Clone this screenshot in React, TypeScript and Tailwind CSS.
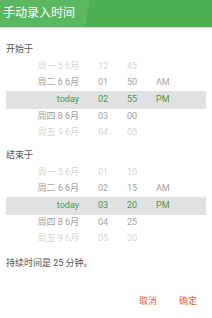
const font = { fontFamily: 'Roboto, "Noto Sans CJK SC", sans-serif' };

type Row = { date: string; hour: string; min: string; ampm: string };

function Picker({ rows }: { rows: Row[] }) {
  return (
    <div className="mx-[6px] flex flex-col text-[9px]">
      {rows.map((r, i) => {
        const sel = i === 2;
        const color = sel
          ? "text-[#4b9a4e]"
          : i === 1 || i === 3
          ? "text-[#a3a3a3]"
          : "text-[#d6d6d6]";
        return (
          <div
            key={i}
            className={`flex items-center ${color} ${sel ? "h-[18px] bg-[#e1e1e1]" : "h-[16px]"}`}
          >
            <span className="w-[73px] text-right">{r.date}</span>
            <span className="ml-[12px] w-[24px] text-center">{r.hour}</span>
            <span className="ml-[5px] w-[24px] text-center">{r.min}</span>
            <span className="ml-[12px]">{r.ampm}</span>
          </div>
        );
      })}
    </div>
  );
}

export default function App() {
  const start: Row[] = [
    { date: "周一 5 6月", hour: "12", min: "45", ampm: "" },
    { date: "周二 6 6月", hour: "01", min: "50", ampm: "AM" },
    { date: "today", hour: "02", min: "55", ampm: "PM" },
    { date: "周四 8 6月", hour: "03", min: "00", ampm: "" },
    { date: "周五 9 6月", hour: "04", min: "05", ampm: "" },
  ];
  const end: Row[] = [
    { date: "周一 5 6月", hour: "01", min: "10", ampm: "" },
    { date: "周二 6 6月", hour: "02", min: "15", ampm: "AM" },
    { date: "today", hour: "03", min: "20", ampm: "PM" },
    { date: "周四 8 6月", hour: "04", min: "25", ampm: "" },
    { date: "周五 9 6月", hour: "05", min: "30", ampm: "" },
  ];

  return (
    <div className="w-[212px] h-[318px] bg-white overflow-hidden" style={font}>
      <div className="relative h-[27px] bg-[#4caf50] shadow-[0_1px_1px_rgba(0,0,0,0.15)] overflow-hidden">
        <div className="absolute left-[-10px] top-0 h-[27px] w-[95px] bg-[#5cb860] -skew-x-[10deg] origin-bottom-left" />
        <div className="relative pl-[3px] leading-[27px] text-[12px] text-white">手动录入时间</div>
      </div>

      <div className="mt-[16px] ml-[6px] h-[12px] leading-[12px] text-[9px] text-[#555]">开始于</div>
      <div className="mt-[4px]">
        <Picker rows={start} />
      </div>

      <div className="mt-[8px] ml-[6px] h-[12px] leading-[12px] text-[9px] text-[#555]">结束于</div>
      <div className="mt-[4px]">
        <Picker rows={end} />
      </div>

      <div className="mt-[10px] ml-[6px] h-[12px] leading-[12px] text-[9px] text-[#555]">持续时间是 25 分钟。</div>

      <div className="mt-[26px] flex h-[12px] items-center leading-[12px] text-[9px] text-[#e0693d]">
        <span className="ml-[139px]">取消</span>
        <span className="ml-[22px]">确定</span>
      </div>
    </div>
  );
}
